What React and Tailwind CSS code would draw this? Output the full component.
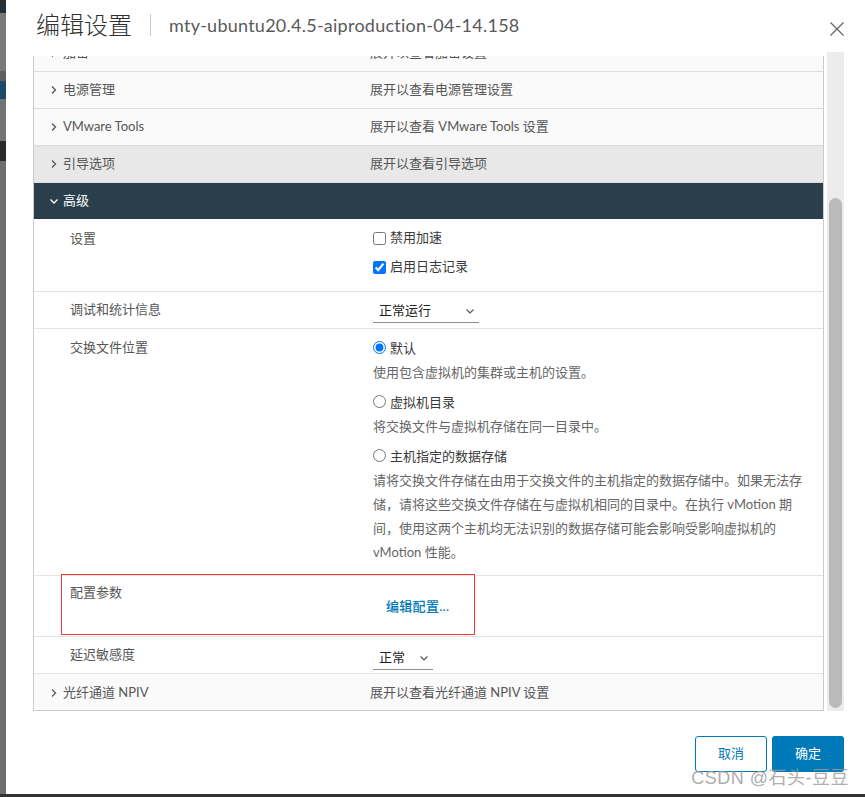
import React from 'react';

const font = { fontFamily: 'Lato, "Noto Sans CJK SC", sans-serif' };

const Chevron = ({ down, light }) => (
    <svg width="10" height="10" viewBox="0 0 10 10" className="shrink-0">
        {down ? (
            <path d="M1.5 3.5 L5 7 L8.5 3.5" fill="none" stroke={light ? '#ffffff' : '#565656'} strokeWidth="1.3" />
        ) : (
            <path d="M3 1.5 L6.5 5 L3 8.5" fill="none" stroke="#565656" strokeWidth="1.3" />
        )}
    </svg>
);

const SelectBox = ({ value, width }) => (
    <div className={`flex items-center justify-between h-[24px] border-b border-[#8c8c8c] pl-[6px] pr-[4px] text-[13px] text-[#222] ${width}`}>
        <span>{value}</span>
        <svg width="10" height="10" viewBox="0 0 10 10">
            <path d="M1.5 3.5 L5 7 L8.5 3.5" fill="none" stroke="#565656" strokeWidth="1.2" />
        </svg>
    </div>
);

// collapsed stack row
const StackRow = ({ label, value, bg = 'bg-[#fafafa]', className = '' }) => (
    <div className={`flex items-center h-[37px] border-b border-[#dddddd] ${bg} ${className}`}>
        <div className="flex items-center w-[336px] pl-[15px] gap-[4px] text-[13px] text-[#565656]">
            <Chevron />
            <span>{label}</span>
        </div>
        <div className="text-[13px] text-[#565656]">{value}</div>
    </div>
);

export default function App() {
    return (
        <div className="w-[865px] h-[797px] flex flex-col bg-[#2b2b2b] overflow-hidden" style={font}>
            <div className="flex flex-1">
                {/* page behind the modal */}
                <div className="w-[6px] flex flex-col">
                    <div className="h-[13px] bg-[#253038]" />
                    <div className="h-[58px] bg-[#7a7a7a]" />
                    <div className="h-[10px] bg-[#5f5f5f]" />
                    <div className="h-[18px] bg-[#1c4b68]" />
                    <div className="h-[42px] bg-[#737373]" />
                    <div className="h-[20px] bg-[#2a2a2a]" />
                    <div className="flex-1 bg-[#6e6e6e]" />
                </div>

                {/* modal */}
                <div className="flex-1 bg-white flex flex-col">
                    {/* header */}
                    <div className="flex items-center h-[56px] pl-[30px] pr-[20px] pb-[7px]">
                        <h1 className="text-[24px] text-[#313131] font-light leading-none">编辑设置</h1>
                        <div className="w-px h-[22px] bg-[#cccccc] mx-[18px]" />
                        <span className="text-[18px] text-[#5a5a5a] leading-none tracking-[0.25px]">mty-ubuntu20.4.5-aiproduction-04-14.158</span>
                        <div className="flex-1" />
                        <svg width="16" height="16" viewBox="0 0 16 16" className="mt-[8px]">
                            <path d="M1.5 1.5 L14.5 14.5 M14.5 1.5 L1.5 14.5" stroke="#666666" strokeWidth="1.3" />
                        </svg>
                    </div>

                    {/* body */}
                    <div className="flex pl-[27px]">
                        <div className="relative w-[791px] h-[655px] overflow-hidden border-l border-r border-b border-[#cccccc]">
                            <div className="-mt-[21px]">
                                <StackRow label="加密" value="展开以查看加密设置" />
                                <StackRow label="电源管理" value="展开以查看电源管理设置" />
                                <StackRow label="VMware Tools" value="展开以查看 VMware Tools 设置" />
                                <StackRow label="引导选项" value="展开以查看引导选项" bg="bg-[#e8e8e8]" />

                                {/* expanded block */}
                                <div className="flex items-center h-[36px] bg-[#2a3f4c] pl-[15px] gap-[4px] text-[13px] text-white">
                                    <Chevron down light />
                                    <span>高级</span>
                                </div>

                                <div className="flex border-b border-[#e3e3e3] pt-[7px] pb-[12px]">
                                    <div className="w-[339px] pl-[36px] leading-[24px] text-[13px] text-[#565656]">设置</div>
                                    <div className="flex flex-col gap-[5px] text-[13px] text-[#3a3a3a]">
                                        <label className="flex items-center h-[24px] gap-[4px]">
                                            <input type="checkbox" className="w-[13px] h-[13px] m-0" />
                                            禁用加速
                                        </label>
                                        <label className="flex items-center h-[24px] gap-[4px]">
                                            <input type="checkbox" defaultChecked className="w-[13px] h-[13px] m-0" />
                                            启用日志记录
                                        </label>
                                    </div>
                                </div>

                                <div className="flex items-center h-[37px] border-b border-[#e3e3e3]">
                                    <div className="w-[339px] pl-[36px] text-[13px] text-[#565656]">调试和统计信息</div>
                                    <div className="pt-[2px]">
                                        <SelectBox value="正常运行" width="w-[106px]" />
                                    </div>
                                </div>

                                <div className="flex border-b border-[#e3e3e3] pt-[6px] pb-[11px]">
                                    <div className="w-[339px] pl-[36px] leading-[24px] text-[13px] text-[#565656]">交换文件位置</div>
                                    <div className="w-[434px] flex flex-col text-[13px] leading-[24px]">
                                        <label className="flex items-center h-[25px] gap-[4px] text-[#3a3a3a]">
                                            <input type="radio" name="swap" defaultChecked className="w-[13px] h-[13px] m-0" />
                                            默认
                                        </label>
                                        <p className="text-[#666]">使用包含虚拟机的集群或主机的设置。</p>
                                        <label className="flex items-center h-[25px] gap-[4px] mt-[5px] text-[#3a3a3a]">
                                            <input type="radio" name="swap" className="w-[13px] h-[13px] m-0" />
                                            虚拟机目录
                                        </label>
                                        <p className="text-[#666]">将交换文件与虚拟机存储在同一目录中。</p>
                                        <label className="flex items-center h-[25px] gap-[4px] mt-[5px] text-[#3a3a3a]">
                                            <input type="radio" name="swap" className="w-[13px] h-[13px] m-0" />
                                            主机指定的数据存储
                                        </label>
                                        <p className="text-[#666]">
                                            请将交换文件存储在由用于交换文件的主机指定的数据存储中。如果无法存储，请将这些交换文件存储在与虚拟机相同的目录中。在执行 vMotion 期间，使用这两个主机均无法识别的数据存储可能会影响受影响虚拟机的 vMotion 性能。
                                        </p>
                                    </div>
                                </div>

                                <div className="flex h-[61px] border-b border-[#e3e3e3]">
                                    <div className="w-[339px] pl-[36px] pt-[4px] leading-[24px] text-[13px] text-[#565656]">配置参数</div>
                                    <div className="pt-[18px] pl-[13px] leading-[24px] text-[13px] text-[#0079b8] font-medium tracking-[0.3px]">编辑配置...</div>
                                </div>

                                <div className="flex items-center h-[37px] border-b border-[#e3e3e3]">
                                    <div className="w-[339px] pl-[36px] text-[13px] text-[#565656]">延迟敏感度</div>
                                    <div className="pt-[6px]">
                                        <SelectBox value="正常" width="w-[60px]" />
                                    </div>
                                </div>

                                <StackRow label="光纤通道 NPIV" value="展开以查看光纤通道 NPIV 设置" className="border-b-0" />
                            </div>

                            {/* red annotation box */}
                            <div className="absolute left-[27px] top-[518px] w-[414px] h-[61px] border border-[#f23b3b]" />
                        </div>

                        {/* scrollbar */}
                        <div className="ml-[3px] w-[17px] h-[659px] -mt-[4px] bg-[#ececec] flex flex-col">
                            <div className="h-[146px]" />
                            <div className="mx-[2px] h-[510px] rounded-full bg-[#bababa]" />
                        </div>
                    </div>

                    {/* footer */}
                    <div className="relative flex justify-end gap-[5px] pr-[21px] mt-[25px]">
                        <button className="w-[72px] h-[36px] rounded-[3px] border border-[#0079b8] text-[#0079b8] text-[13px] bg-white">取消</button>
                        <button className="w-[72px] h-[36px] rounded-[3px] bg-[#0079b8] text-white text-[13px]">确定</button>
                        <span className="absolute right-[16px] top-[29px] text-[18px] text-[#9a9a9a] opacity-80 tracking-[0.5px]" style={{ fontFamily: '"Liberation Sans", "Noto Sans CJK SC", sans-serif' }}>
                            CSDN @石头-豆豆
                        </span>
                    </div>
                </div>
            </div>
            <div className="h-[3px] bg-[#333333]" />
        </div>
    );
}
